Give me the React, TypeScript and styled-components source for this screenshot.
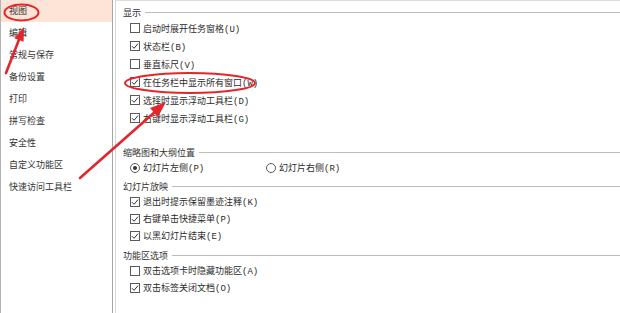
import React from "react";
import styled, { createGlobalStyle } from "styled-components";

const GlobalStyle = createGlobalStyle`
  html, body {
    margin: 0;
    padding: 0;
    background: #ffffff;
  }
  body {
    font-family: "Noto Sans CJK SC", "Noto Sans", sans-serif;
    font-size: 9px;
    color: #2b2b2b;
  }
`;

type Option = {
  label: string;
  key: string;
  checked: boolean;
};

const menuItems = [
  "视图",
  "编辑",
  "常规与保存",
  "备份设置",
  "打印",
  "拼写检查",
  "安全性",
  "自定义功能区",
  "快速访问工具栏",
];

const showOptions: Option[] = [
  { label: "启动时展开任务窗格", key: "U", checked: false },
  { label: "状态栏", key: "B", checked: true },
  { label: "垂直标尺", key: "V", checked: false },
  { label: "在任务栏中显示所有窗口", key: "W", checked: true },
  { label: "选择时显示浮动工具栏", key: "D", checked: true },
  { label: "右键时显示浮动工具栏", key: "G", checked: true },
];

const slideOptions: Option[] = [
  { label: "退出时提示保留墨迹注释", key: "K", checked: true },
  { label: "右键单击快捷菜单", key: "P", checked: true },
  { label: "以黑幻灯片结束", key: "E", checked: true },
];

const ribbonOptions: Option[] = [
  { label: "双击选项卡时隐藏功能区", key: "A", checked: false },
  { label: "双击标签关闭文档", key: "O", checked: true },
];

const CheckBox: React.FC<{ checked: boolean }> = ({ checked }) => (
  <Box>
    {checked && (
      <svg width="8" height="8" viewBox="0 0 8 8">
        <polyline
          points="1,4.2 3.1,6.3 7,1.6"
          fill="none"
          stroke="#333"
          strokeWidth="1"
        />
      </svg>
    )}
  </Box>
);

const CheckRow: React.FC<{ option: Option; tall?: boolean }> = ({
  option,
  tall,
}) => (
  <Row $tall={tall}>
    <CheckBox checked={option.checked} />
    <Label>
      {option.label}
      <Hint>({option.key})</Hint>
    </Label>
  </Row>
);

const Annotations = () => (
  <Overlay width="620" height="313" viewBox="0 0 620 313">
    <g fill="none" stroke="#e3262c" strokeWidth="2">
      <ellipse cx="21.5" cy="12.5" rx="17" ry="8" />
      <ellipse cx="190" cy="83" rx="65" ry="10" />
    </g>
    <g stroke="#e3262c" strokeWidth="2.6" strokeLinecap="round">
      <line x1="6" y1="73" x2="20" y2="37" />
      <line x1="80" y1="178" x2="156" y2="111" />
    </g>
    <g fill="#e3262c">
      <polygon points="24,27 23.6,41.8 14.3,38.2" />
      <polygon points="166,102 158,117.1 150,108.1" />
    </g>
  </Overlay>
);

const App = () => {
  return (
    <Page>
      <GlobalStyle />
      <Sidebar>
        {menuItems.map((item, i) => (
          <MenuItem key={item} $active={i === 0}>
            {item}
          </MenuItem>
        ))}
      </Sidebar>
      <Content>
        <Group>
          <GroupTitle>
            <span>显示</span>
            <Rule />
          </GroupTitle>
          {showOptions.map((o) => (
            <CheckRow key={o.key} option={o} tall />
          ))}
        </Group>

        <Group $space={20}>
          <GroupTitle>
            <span>缩略图和大纲位置</span>
            <Rule />
          </GroupTitle>
          <Row>
            <RadioOption>
              <Radio $on />
              <Label>
                幻灯片左侧<Hint>(P)</Hint>
              </Label>
            </RadioOption>
            <RadioOption>
              <Radio />
              <Label>
                幻灯片右侧<Hint>(R)</Hint>
              </Label>
            </RadioOption>
          </Row>
        </Group>

        <Group $space={5}>
          <GroupTitle>
            <span>幻灯片放映</span>
            <Rule />
          </GroupTitle>
          {slideOptions.map((o) => (
            <CheckRow key={o.key} option={o} />
          ))}
        </Group>

        <Group $space={6}>
          <GroupTitle>
            <span>功能区选项</span>
            <Rule />
          </GroupTitle>
          {ribbonOptions.map((o) => (
            <CheckRow key={o.key} option={o} />
          ))}
        </Group>
      </Content>
      <Annotations />
    </Page>
  );
};

export default App;

const Page = styled.div`
  position: relative;
  display: flex;
  width: 620px;
  height: 313px;
  overflow: hidden;
  background: #fff;
`;

const Sidebar = styled.div`
  box-sizing: border-box;
  width: 113px;
  height: 100%;
  border-left: 1px solid #b4b4b4;
  border-right: 1px solid #a6a6a6;
  margin-right: 2px;
  display: flex;
  flex-direction: column;
`;

const MenuItem = styled.div<{ $active?: boolean }>`
  height: 22px;
  line-height: 22px;
  padding-left: 8px;
  white-space: nowrap;
  color: #333;
  background: ${(p) => (p.$active ? "#fde4d7" : "transparent")};
`;

const Content = styled.div`
  flex: 1;
  box-sizing: border-box;
  height: 100%;
  border-left: 1px solid #d6d6d6;
  border-top: 1px solid #dedede;
  padding: 6px 0 0 7px;
  display: flex;
  flex-direction: column;
`;

const Group = styled.div<{ $space?: number }>`
  display: flex;
  flex-direction: column;
  margin-top: ${(p) => p.$space ?? 0}px;
`;

const GroupTitle = styled.div`
  display: flex;
  align-items: center;
  height: 12px;
  line-height: 12px;
  color: #333;
  white-space: nowrap;
`;

const Rule = styled.div`
  flex: 1;
  height: 1px;
  margin-left: 4px;
  margin-top: -1px;
  background: #bdbdbd;
`;

const Row = styled.div<{ $tall?: boolean }>`
  display: flex;
  align-items: center;
  height: ${(p) => (p.$tall ? 18 : 17)}px;
  padding-left: 7px;
`;

const Box = styled.div`
  box-sizing: border-box;
  width: 10px;
  height: 10px;
  border: 1px solid #5a5a5a;
  background: #fff;
  display: flex;
  align-items: center;
  justify-content: center;
  flex-shrink: 0;
`;

const Label = styled.span`
  margin-left: 3px;
  white-space: nowrap;
  color: #2b2b2b;
`;

const Hint = styled.span`
  font-family: "Liberation Mono", "DejaVu Sans Mono", monospace;
  font-size: 9px;
`;

const RadioOption = styled.div`
  display: flex;
  align-items: center;
  width: 136px;
`;

const Radio = styled.div<{ $on?: boolean }>`
  box-sizing: border-box;
  width: 10px;
  height: 10px;
  border-radius: 50%;
  border: 1px solid #5a5a5a;
  flex-shrink: 0;
  display: flex;
  align-items: center;
  justify-content: center;

  &::after {
    content: "";
    display: ${(p) => (p.$on ? "block" : "none")};
    width: 4px;
    height: 4px;
    border-radius: 50%;
    background: #333;
  }
`;

const Overlay = styled.svg`
  position: absolute;
  left: 0;
  top: 0;
  pointer-events: none;
`;
